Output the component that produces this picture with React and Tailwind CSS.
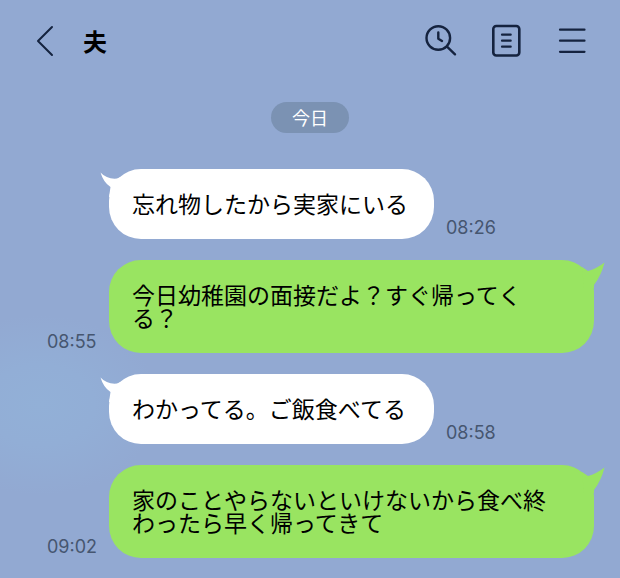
const messages = [
  { id: 1, mine: false, time: '08:26', text: '忘れ物したから実家にいる' },
  { id: 2, mine: true, time: '08:55', text: '今日幼稚園の面接だよ？すぐ帰ってくる？' },
  { id: 3, mine: false, time: '08:58', text: 'わかってる。ご飯食べてる' },
  { id: 4, mine: true, time: '09:02', text: '家のことやらないといけないから食べ終わったら早く帰ってきて' },
];

const iconProps = {
  fill: 'none',
  stroke: 'currentColor',
  strokeLinecap: 'round',
  strokeLinejoin: 'round',
  'aria-hidden': true,
};

const BackIcon = () => (
  <svg width="20" height="34" viewBox="0 0 20 34" strokeWidth="2" {...iconProps}>
    <path d="M17 3 L3 17 L17 31" />
  </svg>
);

const SearchIcon = () => (
  <svg width="34" height="34" viewBox="0 0 34 34" strokeWidth="2.4" {...iconProps}>
    <circle cx="14.3" cy="14" r="11.8" />
    <path d="M14.3 8.5 V14.8 L18 17" />
    <path d="M23 22.7 L31 30.3" />
  </svg>
);

const NoteIcon = () => (
  <svg width="34" height="34" viewBox="0 0 34 34" strokeWidth="2.6" {...iconProps}>
    <rect x="3.3" y="2" width="26" height="29.5" rx="3" />
    <path d="M12 10.7 H20.7 M12 16.7 H20.7 M12 22.7 H20.7" strokeWidth="2.2" />
  </svg>
);

const MenuIcon = () => (
  <svg width="34" height="34" viewBox="0 0 34 34" strokeWidth="2.2" {...iconProps}>
    <path d="M4 5.7 H28.5 M4 16.7 H28.5 M4 27.8 H28.5" />
  </svg>
);

const Tail = ({ mine }) =>
  mine ? (
    <svg className="absolute top-0 -right-3 text-[#99e461]" width="32" height="28" viewBox="0 0 32 28" fill="currentColor" aria-hidden="true">
      <path d="M8 7 L14 11 Q22 9 30.5 2.5 Q27.5 15 20 25 L20 28 L10 28 Z" />
    </svg>
  ) : (
    <svg className="absolute top-0 -left-3 text-white" width="32" height="28" viewBox="0 0 32 28" fill="currentColor" aria-hidden="true">
      <path d="M3.5 3.5 Q10 10.5 20 9.5 L26 7 L24 28 L12 28 L13.5 18 Q6.5 13.5 3.5 3.5 Z" />
    </svg>
  );

const Message = ({ mine, time, text }) => (
  <li className={`flex items-end gap-3 ${mine ? 'flex-row-reverse pl-[47px] pr-[26px]' : 'pl-[109px]'}`}>
    <div
      className={`relative rounded-[32px] pt-[23px] pb-6 pl-[23px] ${
        mine ? 'flex-1 bg-[#99e461] pr-[44px]' : 'min-w-[325px] bg-white pr-[26px]'
      }`}
    >
      <Tail mine={mine} />
      <p className="relative text-[23px] leading-[23px] text-black">{text}</p>
    </div>
    <time className="w-[50px] shrink-0 font-['Inter','Noto_Sans_CJK_JP',sans-serif] text-[18px] leading-[22px] text-[#465670]">
      {time}
    </time>
  </li>
);

export default function App() {
  return (
    <div className="min-h-screen bg-[#92a9d2] bg-[radial-gradient(ellipse_120px_90px_at_40px_405px,#92b0d7_0%,#92aed6_45%,transparent_100%)] font-['Noto_Sans_CJK_JP',sans-serif]">
      <header className="flex h-[82px] items-center pr-[30px] pl-[35px] text-[#15233f]">
        <button type="button" aria-label="戻る">
          <BackIcon />
        </button>
        <h1 className="ml-7 flex-1 text-[24px] font-bold text-black">夫</h1>
        <div className="flex gap-8">
          <button type="button" aria-label="検索">
            <SearchIcon />
          </button>
          <button type="button" aria-label="ノート">
            <NoteIcon />
          </button>
          <button type="button" aria-label="メニュー">
            <MenuIcon />
          </button>
        </div>
      </header>

      <main className="pt-5 pb-5">
        <p className="mx-auto w-fit rounded-full bg-[#7b92b3] px-[21px] text-[18px] leading-[31px] text-white">今日</p>
        <ul className="mt-9 flex flex-col gap-[21px]">
          {messages.map((m) => (
            <Message key={m.id} mine={m.mine} time={m.time} text={m.text} />
          ))}
        </ul>
      </main>
    </div>
  );
}
